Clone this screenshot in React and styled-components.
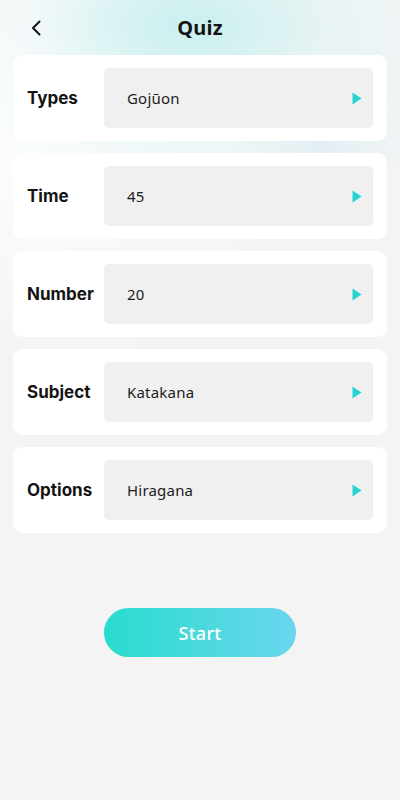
import React from "react";
import styled, { createGlobalStyle } from "styled-components";

const Global = createGlobalStyle`
  html, body { margin: 0; padding: 0; }
  body { font-family: "Noto Sans", "Open Sans", sans-serif; background: #f4f4f4; }
  * { box-sizing: border-box; }
`;

const Page = styled.div`
  position: relative;
  min-height: 800px;
  width: 400px;
  overflow: hidden;
  background:
    radial-gradient(ellipse 150px 80px at 185px 25px, rgba(185, 236, 236, 0.6), rgba(200, 240, 240, 0) 100%),
    radial-gradient(ellipse 280px 190px at 210px 40px, rgba(222, 243, 244, 0.85), rgba(240, 244, 244, 0) 100%),
    radial-gradient(ellipse 90px 50px at 320px 145px, rgba(225, 236, 244, 0.8), rgba(240, 244, 244, 0) 100%),
    radial-gradient(ellipse 300px 260px at 40px 110px, rgba(255, 255, 255, 0.95), rgba(255, 255, 255, 0) 100%),
    #f4f4f4;
`;

const Header = styled.header`
  height: 55px;
  display: grid;
  grid-template-columns: 60px 1fr 60px;
  align-items: center;
`;

const Back = styled.button`
  border: none;
  background: none;
  padding: 0 0 0 30px;
  height: 40px;
  display: flex;
  align-items: center;
  cursor: pointer;
`;

const Title = styled.h1`
  margin: 0;
  text-align: center;
  font-family: "Noto Sans", sans-serif;
  font-size: 20px;
  font-weight: 700;
  color: #141414;
  letter-spacing: 0.2px;
`;

const List = styled.div`
  display: flex;
  flex-direction: column;
  gap: 12px;
  padding: 0 13px;
`;

const Card = styled.div`
  background: #ffffff;
  border-radius: 9px;
  height: 86px;
  padding: 13px 14px 13px 14px;
  display: flex;
  align-items: center;
`;

const Label = styled.div`
  width: 77px;
  flex: none;
  font-family: Inter, "Noto Sans", sans-serif;
  font-size: 17px;
  font-weight: 700;
  color: #141414;
`;

const Field = styled.div`
  flex: 1;
  height: 60px;
  background: #f0f0f0;
  border-radius: 5px;
  display: flex;
  align-items: center;
  justify-content: space-between;
  padding: 0 11px 0 23px;
`;

const Value = styled.span`
  font-family: "Noto Sans", sans-serif;
  font-size: 15px;
  color: #1c1c1c;
  letter-spacing: 0.2px;
`;

const Footer = styled.div`
  display: flex;
  justify-content: center;
  padding-top: 75px;
`;

const StartButton = styled.button`
  width: 192px;
  height: 49px;
  border: none;
  border-radius: 25px;
  background: linear-gradient(90deg, #28dccf 0%, #4ad9dc 50%, #6ad6ef 100%);
  color: #ffffff;
  font-family: "Noto Sans", sans-serif;
  font-size: 18px;
  font-weight: 500;
  letter-spacing: 0.3px;
  cursor: pointer;
`;

const Arrow = () => (
  <svg width="10" height="13" viewBox="0 0 10 13">
    <path d="M0.5 0.5 L9.5 6.5 L0.5 12.5 Z" fill="#27d3d3" />
  </svg>
);

const rows = [
  ["Types", "Gojūon"],
  ["Time", "45"],
  ["Number", "20"],
  ["Subject", "Katakana"],
  ["Options", "Hiragana"],
];

export default function App() {
  return (
    <>
      <Global />
      <Page>
        <Header>
          <Back aria-label="back">
            <svg width="12" height="16" viewBox="0 0 12 16">
              <path d="M9.5 1.5 L3 8 L9.5 14.5" fill="none" stroke="#111" strokeWidth="2" strokeLinecap="round" strokeLinejoin="round" />
            </svg>
          </Back>
          <Title>Quiz</Title>
          <div />
        </Header>
        <List>
          {rows.map(([label, value]) => (
            <Card key={label}>
              <Label>{label}</Label>
              <Field>
                <Value>{value}</Value>
                <Arrow />
              </Field>
            </Card>
          ))}
        </List>
        <Footer>
          <StartButton>Start</StartButton>
        </Footer>
      </Page>
    </>
  );
}
